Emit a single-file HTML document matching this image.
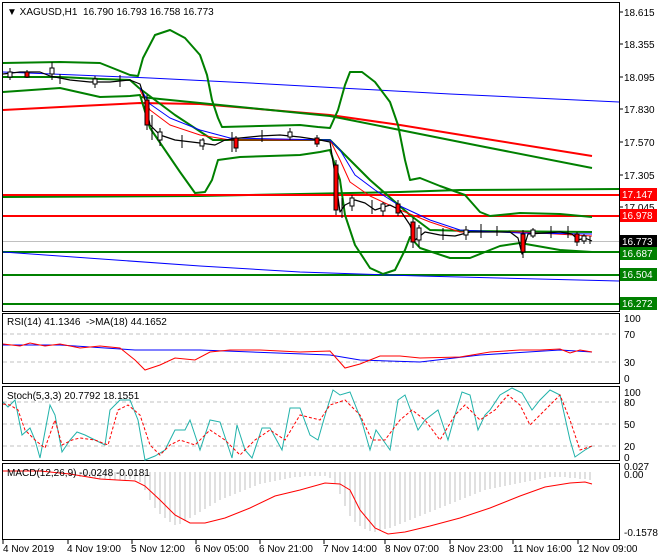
<!DOCTYPE html>
<html><head><meta charset="utf-8"><style>
body{margin:0;background:#fff;width:660px;height:560px;overflow:hidden}
svg{display:block;font-family:"Liberation Sans",sans-serif}
text{font-size:10px;fill:#000}
</style></head><body>
<svg width="660" height="560" viewBox="0 0 660 560" xmlns="http://www.w3.org/2000/svg">
<rect width="660" height="560" fill="#fff"/>
<g fill="none" stroke="#000" stroke-width="1">
<rect x="2.5" y="2.5" width="617" height="309"/>
<rect x="2.5" y="313.5" width="617" height="70"/>
<rect x="2.5" y="386.5" width="617" height="74"/>
<rect x="2.5" y="463.5" width="617" height="76"/>
</g>
<g stroke="#000">
<line x1="619" y1="12" x2="623" y2="12"/><line x1="619" y1="44" x2="623" y2="44"/><line x1="619" y1="77" x2="623" y2="77"/><line x1="619" y1="109" x2="623" y2="109"/><line x1="619" y1="142" x2="623" y2="142"/><line x1="619" y1="175" x2="623" y2="175"/><line x1="619" y1="207" x2="623" y2="207"/>
</g>
<g fill="none" stroke-linejoin="round">
<line x1="3" y1="241.5" x2="619" y2="241.5" stroke="#c0c0c0"/>
<polyline stroke="#008000" stroke-width="2" points="3,197 200,196 300,194 400,192 460,190 619,189"/>
<line x1="3" y1="195" x2="619" y2="195" stroke="#f00" stroke-width="2"/>
<line x1="3" y1="216" x2="619" y2="216" stroke="#f00" stroke-width="2"/>
<line x1="3" y1="252" x2="619" y2="252" stroke="#008000" stroke-width="2"/>
<line x1="3" y1="275" x2="619" y2="275" stroke="#008000" stroke-width="2"/>
<line x1="3" y1="304" x2="619" y2="304" stroke="#008000" stroke-width="2"/>
<polyline stroke="#00f" points="3,72 150,78 250,83 340,88 450,94 619,102"/>
<polyline stroke="#00f" points="3,252 200,266 300,272 420,276 619,281"/>
<polyline stroke="#f00" stroke-width="2" points="3,110 80,106 140,103 200,104 330,115 400,125 480,138 592,156"/>
<polyline stroke="#008000" stroke-width="2" points="140,97 200,103 330,116 400,130 480,146 592,168"/>
<!-- upper band -->
<polyline stroke="#008000" stroke-width="2" points="3,63 60,62 100,63 130,75 138,76 143,58 155,35 170,30 185,38 200,55 207,75 212,100 218,118 222,127 300,125 318,127 330,128 338,110 345,85 350,72 362,72 375,82 390,102 398,125 405,160 410,180 420,178 440,186 465,195 480,212 490,216 520,213 560,214 592,217"/>
<!-- middle band -->
<polyline stroke="#008000" stroke-width="2" points="3,77 60,77 100,79 130,80 139,88 175,115 213,140 230,140 330,140 370,180 410,215 430,230 470,231 592,232"/>
<!-- lower band -->
<polyline stroke="#008000" stroke-width="2" points="3,92 60,88 100,97 130,96 140,95 150,128 165,150 180,172 195,193 205,192 212,180 218,160 240,157 300,155 320,152 330,150 340,180 345,215 355,245 370,268 383,274 395,270 405,250 410,237 420,248 450,258 470,258 485,252 500,246 520,243 560,250 592,252"/>
<polyline stroke="#f00" points="140,90 150,110 170,125 200,135 230,140 330,140 340,160 350,182 370,196 400,210 430,222 460,232 520,232 592,236"/>
<polyline stroke="#00f" points="140,88 150,104 170,118 200,130 230,138 330,140 340,150 355,175 375,190 400,206 430,220 460,230 520,233 592,234"/>
<polyline stroke="#000" stroke-width="1.2" points="3,74 20,72 40,72 50,76 70,80 90,82 110,82 130,80 140,84 145,100 150,125 160,135 175,140 200,143 215,145 225,140 240,138 260,136 280,135 300,137 320,140 330,142 335,175 340,212 345,205 355,200 365,203 375,210 390,205 400,210 410,225 415,240 425,232 440,235 455,236 470,232 490,232 510,232 518,238 522,254 528,234 545,233 560,232 572,234 578,240 585,238 592,241"/>
</g>
<g stroke="#000" stroke-width="1">
<path d="M10,68v12M27,70v8M52,62v18M60,74v10M95,76v12M120,75v12M147,95v35M152,115v25M160,128v18M182,135v13M203,138v12M232,132v20M236,136v16M262,130v12M290,128v12M317,135v12M336,160v55M342,198v20M352,195v16M372,200v14M383,202v14M398,200v16M413,218v30M419,225v22M443,228v12M466,226v14M481,224v14M497,226v10M523,230v28M533,228v10M551,226v12M568,226v12M577,232v14M584,234v10M590,236v8"/>
</g>
<g fill="#fff" stroke="#000">
<rect x="8" y="72" width="4" height="5"/><rect x="50" y="68" width="4" height="6"/><rect x="93" y="79" width="4" height="5"/><rect x="158" y="132" width="4" height="8"/><rect x="200" y="140" width="4" height="6"/><rect x="288" y="132" width="4" height="5"/><rect x="350" y="198" width="4" height="8"/><rect x="381" y="204" width="4" height="7"/><rect x="417" y="228" width="4" height="12"/><rect x="464" y="230" width="4" height="5"/><rect x="531" y="230" width="4" height="6"/><rect x="582" y="236" width="4" height="5"/>
</g>
<g fill="#f00" stroke="#000">
<rect x="25" y="72" width="4" height="5"/><rect x="145" y="100" width="4" height="25"/><rect x="234" y="138" width="4" height="10"/><rect x="315" y="138" width="4" height="6"/><rect x="334" y="165" width="4" height="45"/><rect x="396" y="204" width="4" height="9"/><rect x="411" y="222" width="4" height="20"/><rect x="521" y="234" width="4" height="18"/><rect x="575" y="234" width="4" height="8"/>
</g>
<g>
<text x="624" y="16">18.615</text><text x="624" y="48">18.355</text><text x="624" y="81">18.095</text><text x="624" y="113">17.830</text><text x="624" y="146">17.570</text><text x="624" y="179">17.305</text><text x="624" y="211">17.045</text>
<rect x="620" y="188" width="37" height="13" fill="#f00"/><text x="622" y="198" style="fill:#fff">17.147</text>
<rect x="620" y="209" width="37" height="13" fill="#f00"/><text x="622" y="219" style="fill:#fff">16.978</text>
<rect x="620" y="235" width="37" height="13" fill="#000"/><text x="622" y="245" style="fill:#fff">16.773</text>
<rect x="620" y="247" width="37" height="13" fill="#008000"/><text x="622" y="257" style="fill:#fff">16.687</text>
<rect x="620" y="268" width="37" height="13" fill="#008000"/><text x="622" y="278" style="fill:#fff">16.504</text>
<rect x="620" y="297" width="37" height="13" fill="#008000"/><text x="622" y="307" style="fill:#fff">16.272</text>
</g>
<text x="7" y="15">▼ XAGUSD,H1&#160; 16.790 16.793 16.758 16.773</text>
<g fill="none">
<line x1="3" y1="334" x2="619" y2="334" stroke="#c0c0c0" stroke-dasharray="4,3"/>
<line x1="3" y1="362" x2="619" y2="362" stroke="#c0c0c0" stroke-dasharray="4,3"/>
<polyline stroke="#00f" points="3,345 60,345 135,350 150,350 200,350 330,355 360,360 420,362 480,355 560,350 592,352"/>
<polyline stroke="#f00" points="3,344 20,346 30,343 45,346 60,344 80,348 100,346 120,348 135,360 145,370 160,365 175,358 195,360 210,352 230,350 260,350 300,352 330,351 345,368 360,364 380,356 400,356 420,358 460,357 490,352 520,350 540,350 560,349 570,353 580,350 592,352"/>
</g>
<text x="7" y="325">RSI(14) 41.1346&#160; -&gt;MA(18) 44.1652</text>
<text x="624" y="322">100</text><text x="624" y="338">70</text><text x="624" y="366">30</text><text x="624" y="382">0</text>
<g fill="none">
<line x1="3" y1="402" x2="619" y2="402" stroke="#c0c0c0" stroke-dasharray="4,3"/>
<line x1="3" y1="424" x2="619" y2="424" stroke="#c0c0c0" stroke-dasharray="4,3"/>
<line x1="3" y1="446" x2="619" y2="446" stroke="#c0c0c0" stroke-dasharray="4,3"/>
<polyline stroke="#20b2aa" points="3,402 8,407 15,400 22,435 30,428 35,440 40,458 50,405 55,415 62,452 70,440 77,432 85,435 95,440 105,445 110,410 120,400 130,400 138,420 145,460 155,456 165,450 175,430 185,430 190,420 200,450 210,420 220,422 232,458 237,425 245,450 252,458 262,428 270,428 282,450 290,408 300,408 310,435 318,440 326,412 333,390 340,395 350,392 362,422 370,450 376,430 390,450 398,400 405,395 418,430 425,420 438,410 448,440 455,415 462,392 470,395 478,430 485,415 490,410 500,395 512,388 522,393 532,410 540,400 550,390 560,395 570,440 575,457 585,450 592,446"/>
<polyline stroke="#f00" stroke-dasharray="3,2" points="3,404 10,405 18,410 25,430 35,440 45,448 55,420 62,445 72,440 80,438 95,440 108,445 118,410 128,405 140,415 150,445 160,455 170,445 180,440 195,445 210,430 225,440 240,455 255,440 270,430 285,440 300,415 320,420 330,405 345,400 360,415 372,440 385,440 400,420 412,410 425,420 440,440 455,415 465,405 480,420 495,410 508,395 520,405 530,425 545,410 560,395 570,420 580,450 592,446"/>
</g>
<text x="7" y="399">Stoch(5,3,3) 20.7792 18.1551</text>
<text x="624" y="396">100</text><text x="624" y="406">80</text><text x="624" y="428">50</text><text x="624" y="450">20</text><text x="624" y="461">0</text>
<g stroke="#c0c0c0" stroke-width="1">
<path d="M75,472v4M80,472v5M85,472v5M90,472v6M95,472v6M100,472v7M105,472v7M110,472v8M115,472v8M120,472v8M125,472v8M130,472v7M135,472v8M140,472v10M145,472v18M150,472v28M155,472v36M160,472v42M165,472v46M170,472v50M175,472v53M180,472v52M185,472v49M190,472v46M195,472v43M200,472v40M205,472v37M210,472v34M215,472v31M220,472v28M225,472v26M230,472v24M235,472v22M240,472v20M245,472v18M250,472v16M255,472v14M260,472v12M265,472v11M270,472v10M275,472v9M280,472v8M285,472v7M290,472v6M295,472v5M300,472v5M305,472v4M310,472v4M315,472v4M320,472v4M325,472v4M330,472v6M335,472v12M340,472v22M345,472v34M350,472v44M355,472v50M360,472v54M365,472v57M370,472v59M375,472v60M380,472v59M385,472v57M390,472v56M395,472v54M400,472v52M405,472v50M410,472v48M415,472v46M420,472v44M425,472v42M430,472v40M435,472v38M440,472v36M445,472v34M450,472v32M455,472v30M460,472v28M465,472v26M470,472v24M475,472v22M480,472v20M485,472v18M490,472v17M495,472v16M500,472v15M505,472v14M510,472v13M515,472v12M520,472v11M525,472v10M530,472v9M535,472v8M540,472v7M545,472v6M550,472v5M555,472v5M560,472v5M565,472v5M570,472v6M575,472v6M580,472v7M585,472v7M590,472v8"/>
</g>
<polyline fill="none" stroke="#f00" points="3,471 40,471 70,474 100,479 135,481 145,486 160,500 175,515 190,523 205,523 225,518 250,508 275,496 300,490 325,483 340,484 350,490 360,510 375,528 388,534 405,532 430,526 460,518 490,508 520,496 545,487 570,483 585,482 592,484"/>
<text x="7" y="476">MACD(12,26,9) -0.0248 -0.0181</text>
<text x="624" y="470">0.027</text><text x="624" y="478">0.00</text><text x="624" y="536">-0.1578</text>
<g stroke="#000"><path d="M3,540v4M68,540v4M132,540v4M196,540v4M260,540v4M324,540v4M385,540v4M450,540v4M513,540v4M578,540v4"/></g>
<text x="3" y="552">4 Nov 2019</text><text x="67" y="552">4 Nov 19:00</text><text x="131" y="552">5 Nov 12:00</text><text x="195" y="552">6 Nov 05:00</text><text x="259" y="552">6 Nov 21:00</text><text x="323" y="552">7 Nov 14:00</text><text x="385" y="552">8 Nov 07:00</text><text x="449" y="552">8 Nov 23:00</text><text x="513" y="552">11 Nov 16:00</text><text x="578" y="552">12 Nov 09:00</text>
</svg>
</body></html>
